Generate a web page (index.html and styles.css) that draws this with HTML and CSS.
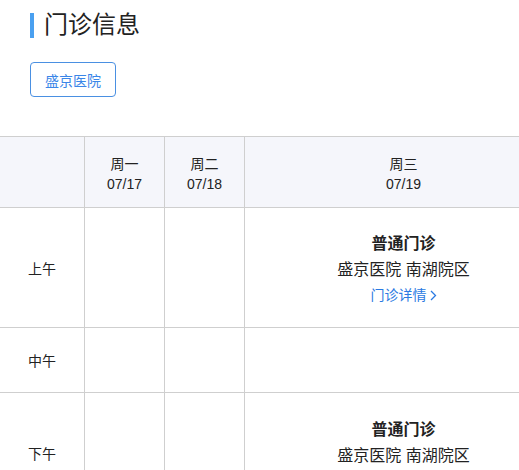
FILE: index.html
```html
<!DOCTYPE html>
<html lang="zh-CN">
<head>
<meta charset="utf-8">
<title>门诊信息</title>
<link rel="stylesheet" href="styles.css">
</head>
<body>
<div class="page">
  <header class="head">
    <h1 class="title"><span class="bar"></span>门诊信息</h1>
    <button class="hosp-btn" type="button">盛京医院</button>
  </header>
  <div class="table-wrap">
    <div class="grid">
      <div class="cell hd"></div>
      <div class="cell hd"><span>周一</span><span>07/17</span></div>
      <div class="cell hd"><span>周二</span><span>07/18</span></div>
      <div class="cell hd"><span>周三</span><span>07/19</span></div>

      <div class="cell label r-am">上午</div>
      <div class="cell r-am"></div>
      <div class="cell r-am"></div>
      <div class="cell r-am slot">
        <div class="slot-type">普通门诊</div>
        <div class="slot-place">盛京医院 南湖院区</div>
        <a class="slot-link" href="#">门诊详情<svg class="chev" width="7" height="11" viewBox="0 0 7 11"><path d="M1 1 L5.5 5.5 L1 10" fill="none" stroke="currentColor" stroke-width="1.3"/></svg></a>
      </div>

      <div class="cell label r-noon">中午</div>
      <div class="cell r-noon"></div>
      <div class="cell r-noon"></div>
      <div class="cell r-noon"></div>

      <div class="cell label r-pm">下午</div>
      <div class="cell r-pm"></div>
      <div class="cell r-pm"></div>
      <div class="cell r-pm slot">
        <div class="slot-type">普通门诊</div>
        <div class="slot-place">盛京医院 南湖院区</div>
        <a class="slot-link" href="#">门诊详情<svg class="chev" width="7" height="11" viewBox="0 0 7 11"><path d="M1 1 L5.5 5.5 L1 10" fill="none" stroke="currentColor" stroke-width="1.3"/></svg></a>
      </div>
    </div>
  </div>
</div>
</body>
</html>
```
FILE: styles.css
```css
html, body {
  margin: 0;
  padding: 0;
  background: #fff;
}
body {
  font-family: "Liberation Sans", "Noto Sans CJK SC", sans-serif;
  color: #222;
  overflow: hidden;
}
.page {
  width: 519px;
  overflow: hidden;
}
.head {
  padding: 12px 30px 0;
  display: flex;
  flex-direction: column;
  align-items: flex-start;
}
.title {
  margin: 0;
  display: flex;
  align-items: center;
  font-size: 24px;
  font-weight: normal;
  line-height: 26px;
  height: 26px;
  color: #222;
}
.bar {
  display: inline-block;
  width: 4px;
  height: 25px;
  background: #4aa0f0;
  margin-right: 10px;
}
.hosp-btn {
  margin-top: 24px;
  width: 86px;
  height: 35px;
  border: 1px solid #4a90e2;
  border-radius: 4px;
  background: #fff;
  color: #3a86e8;
  font-family: "Liberation Sans", "Noto Sans CJK SC", sans-serif;
  font-size: 14px;
  padding: 0;
}
.table-wrap {
  margin-top: 39px;
  overflow: hidden;
}
.grid {
  display: grid;
  grid-template-columns: 85px 80px 80px 318px;
  grid-template-rows: 71px 120px 65px 121px;
  width: 563px;
  border-top: 1px solid #cfcfcf;
}
.cell {
  border-right: 1px solid #cfcfcf;
  border-bottom: 1px solid #cfcfcf;
  display: flex;
  flex-direction: column;
  align-items: center;
  justify-content: center;
  font-size: 14px;
}
.hd {
  background: #f5f6fb;
  line-height: 20px;
  padding-top: 3px;
  box-sizing: border-box;
}
.label {
  font-size: 14px;
}
.slot {
  padding-top: 3px;
  box-sizing: border-box;
}
.slot-type {
  font-size: 16px;
  font-weight: bold;
  line-height: 26px;
  color: #222;
}
.slot-place {
  font-size: 16px;
  line-height: 26px;
  color: #222;
}
.slot-link {
  font-size: 14px;
  line-height: 24px;
  color: #2a7ae2;
  text-decoration: none;
  display: flex;
  align-items: center;
}
.chev {
  margin-left: 3px;
}
```
